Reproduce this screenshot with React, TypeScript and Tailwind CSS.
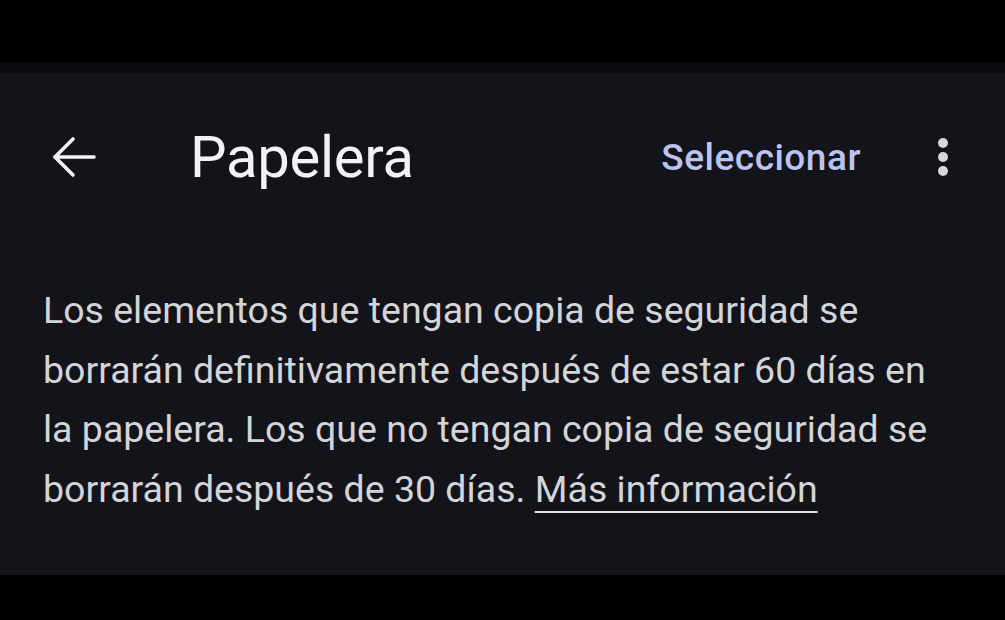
export default function App() {
  return (
    <div className="flex h-[620px] w-[1005px] flex-col bg-black font-['Roboto','Liberation_Sans',sans-serif]">
      <div className="h-[62px] shrink-0 bg-black" />
      <div className="h-[11px] shrink-0 bg-[#0c0c0e]" />
      <div className="shrink-0 bg-[#131419]">
        <div className="flex h-[168px] items-center">
          <div className="flex w-[190px] shrink-0 items-center pl-[52px]">
            <svg width="44" height="42" viewBox="0 0 44 42" fill="none" stroke="#f4f4f6" strokeWidth="3.6" strokeLinecap="round" strokeLinejoin="round">
              <path d="M42 21H3" />
              <path d="M21 3L3 21l18 18" />
            </svg>
          </div>
          <h1 className="flex-1 text-[58px] leading-none tracking-[-0.3px] text-[#f3f3f5]">Papelera</h1>
          <button className="mr-[77px] text-[37px] font-medium leading-none tracking-[0.5px] text-[#bac3f1]">Seleccionar</button>
          <div className="mr-[57px] flex flex-col items-center gap-[4px]">
            <span className="h-[10px] w-[10px] rounded-full bg-[#d6d7db]" />
            <span className="h-[10px] w-[10px] rounded-full bg-[#d6d7db]" />
            <span className="h-[10px] w-[10px] rounded-full bg-[#d6d7db]" />
          </div>
        </div>
        <p className="w-[950px] pb-[56px] pl-[43px] pt-[40px] text-[37.5px] leading-[59.5px] text-[#d4d5d9]">
          Los elementos que tengan copia de seguridad se borrarán definitivamente después de estar 60 días en la papelera. Los que no tengan copia de seguridad se borrarán después de 30 días.{" "}
          <a className="underline decoration-2 underline-offset-[9px] decoration-[#e2e3e6]">Más información</a>
        </p>
      </div>
      <div className="flex-1 bg-black" />
    </div>
  );
}
